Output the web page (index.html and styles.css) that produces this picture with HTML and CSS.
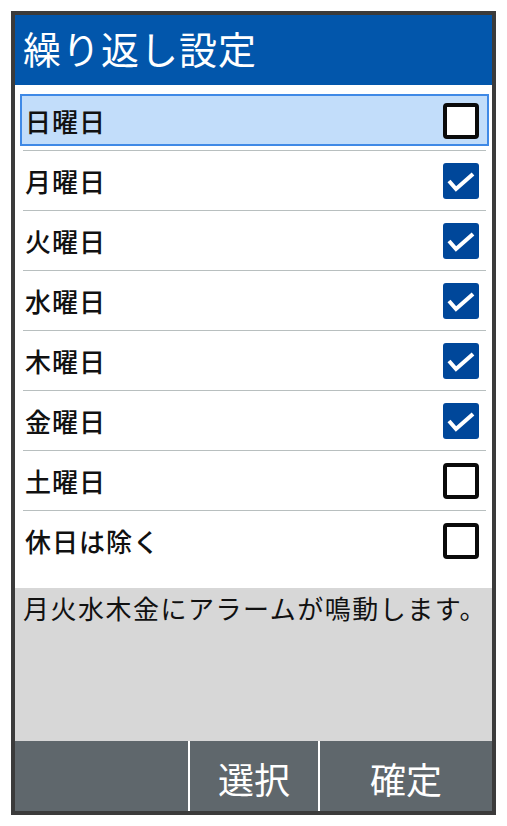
FILE: index.html
```html
<!DOCTYPE html>
<html lang="ja">
<head>
<meta charset="utf-8">
<link rel="stylesheet" href="styles.css">
</head>
<body>
<div class="frame">
  <div class="header">繰り返し設定</div>
  <div class="list">
    <div class="row selected"><span class="label">日曜日</span><span class="box"></span></div>
    <div class="row"><span class="label">月曜日</span><span class="box checked"><svg viewBox="0 0 36 36"><polyline points="6,18 13,26 30,11"/></svg></span></div>
    <div class="row"><span class="label">火曜日</span><span class="box checked"><svg viewBox="0 0 36 36"><polyline points="6,18 13,26 30,11"/></svg></span></div>
    <div class="row"><span class="label">水曜日</span><span class="box checked"><svg viewBox="0 0 36 36"><polyline points="6,18 13,26 30,11"/></svg></span></div>
    <div class="row"><span class="label">木曜日</span><span class="box checked"><svg viewBox="0 0 36 36"><polyline points="6,18 13,26 30,11"/></svg></span></div>
    <div class="row"><span class="label">金曜日</span><span class="box checked"><svg viewBox="0 0 36 36"><polyline points="6,18 13,26 30,11"/></svg></span></div>
    <div class="row"><span class="label">土曜日</span><span class="box"></span></div>
    <div class="row last"><span class="label">休日は除く</span><span class="box"></span></div>
  </div>
  <div class="message">月火水木金にアラームが鳴動します。</div>
  <div class="softkeys">
    <div class="key left"></div>
    <div class="key mid">選択</div>
    <div class="key right">確定</div>
  </div>
</div>
</body>
</html>
```

FILE: styles.css
```css
html, body {
  margin: 0;
  padding: 0;
  background: #ffffff;
}
body {
  font-family: "Noto Sans CJK JP", "Noto Sans", sans-serif;
}
.frame {
  margin: 11px 0 0 11px;
  width: 477px;
  height: 796px;
  border: 4px solid #3b3b3b;
  display: flex;
  flex-direction: column;
  background: #ffffff;
}
.header {
  height: 70px;
  background: #0256ab;
  color: #ffffff;
  font-size: 38px;
  font-weight: 400;
  line-height: 66px;
  padding-left: 8px;
  letter-spacing: 1px;
}
.list {
  height: 503px;
  box-sizing: border-box;
  padding: 6px 6px 0 8px;
}
.row {
  position: relative;
  height: 59px;
  border-bottom: 1px solid #b8bfbf;
  display: flex;
  align-items: center;
  justify-content: space-between;
  padding: 0 7px 0 2px;
}
.row.last {
  border-bottom: none;
}
.row.selected::before {
  content: "";
  position: absolute;
  left: -3px;
  right: -3px;
  top: 3px;
  bottom: 4px;
  background: #c2ddfa;
  border: 2px solid #3f89e6;
  box-sizing: border-box;
}
.label {
  position: relative;
  font-size: 26px;
  font-weight: 500;
  letter-spacing: 1px;
  color: #111111;
  line-height: 36px;
}
.box {
  position: relative;
  width: 36px;
  height: 36px;
  box-sizing: border-box;
  border: 4px solid #0a0a0a;
  border-radius: 4px;
  background: #ffffff;
}
.box.checked {
  border: none;
  background: #00479a;
  border-radius: 3px;
}
.box svg {
  display: block;
  width: 36px;
  height: 36px;
}
.box polyline {
  fill: none;
  stroke: #ffffff;
  stroke-width: 4;
  stroke-linecap: butt;
  stroke-linejoin: miter;
}
.message {
  height: 153px;
  background: #d7d7d7;
  font-size: 26px;
  font-weight: 400;
  letter-spacing: 1.5px;
  line-height: 36px;
  padding: 2px 0 0 8px;
  box-sizing: border-box;
  color: #111111;
}
.softkeys {
  flex: 1;
  display: flex;
  background: #5f676c;
}
.key {
  color: #ffffff;
  font-size: 36px;
  font-weight: 400;
  display: flex;
  align-items: center;
  justify-content: center;
  padding-top: 4px;
}
.key.left {
  width: 173px;
  border-right: 2px solid #ffffff;
}
.key.mid {
  width: 128px;
  border-right: 2px solid #ffffff;
}
.key.right {
  flex: 1;
}
```
